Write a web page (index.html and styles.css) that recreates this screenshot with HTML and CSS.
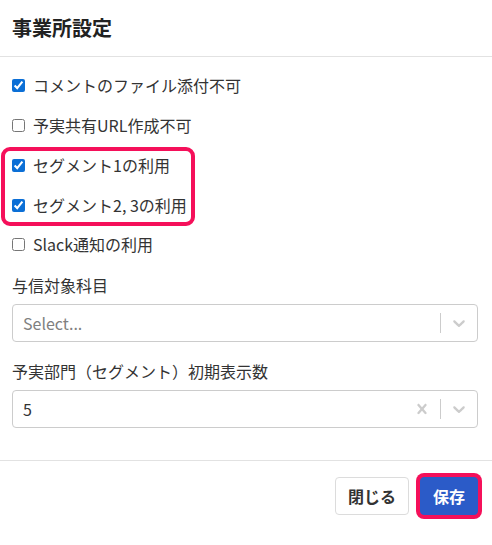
FILE: index.html
```html
<!DOCTYPE html>
<html lang="ja">
<head>
<meta charset="utf-8">
<title>事業所設定</title>
<link rel="stylesheet" href="styles.css">
</head>
<body>
<div class="modal">
  <header class="modal-header">
    <h1 class="modal-title">事業所設定</h1>
  </header>

  <main class="modal-body">
    <div class="check-list">
      <label class="check"><input type="checkbox" checked><span>コメントのファイル添付不可</span></label>
      <label class="check"><input type="checkbox"><span>予実共有URL作成不可</span></label>
      <div class="check-group marked">
        <label class="check"><input type="checkbox" checked><span>セグメント1の利用</span></label>
        <label class="check"><input type="checkbox" checked><span>セグメント2, 3の利用</span></label>
      </div>
      <label class="check"><input type="checkbox"><span>Slack通知の利用</span></label>
    </div>

    <div class="field">
      <div class="field-label">与信対象科目</div>
      <div class="select">
        <div class="select-value placeholder">Select...</div>
        <div class="select-indicators">
          <span class="separator"></span>
          <span class="indicator">
            <svg viewBox="0 0 20 20" width="20" height="20"><path d="M4.516 7.548c0.436-0.446 1.043-0.481 1.576 0l3.908 3.747 3.908-3.747c0.533-0.481 1.141-0.446 1.574 0 0.436 0.445 0.408 1.197 0 1.615-0.406 0.418-4.695 4.502-4.695 4.502-0.217 0.223-0.502 0.335-0.787 0.335s-0.57-0.112-0.789-0.335c0 0-4.287-4.084-4.695-4.502s-0.436-1.170 0-1.615z"/></svg>
          </span>
        </div>
      </div>
    </div>

    <div class="field">
      <div class="field-label">予実部門（セグメント）初期表示数</div>
      <div class="select">
        <div class="select-value">5</div>
        <div class="select-indicators">
          <span class="indicator">
            <svg viewBox="0 0 20 20" width="20" height="20"><path d="M14.348 14.849c-0.469 0.469-1.229 0.469-1.697 0l-2.651-3.030-2.651 3.029c-0.469 0.469-1.229 0.469-1.697 0-0.469-0.469-0.469-1.229 0-1.697l2.758-3.150-2.759-3.152c-0.469-0.469-0.469-1.228 0-1.697s1.228-0.469 1.697 0l2.652 3.031 2.651-3.031c0.469-0.469 1.228-0.469 1.697 0s0.469 1.229 0 1.697l-2.758 3.152 2.758 3.150c0.469 0.469 0.469 1.229 0 1.698z"/></svg>
          </span>
          <span class="separator"></span>
          <span class="indicator">
            <svg viewBox="0 0 20 20" width="20" height="20"><path d="M4.516 7.548c0.436-0.446 1.043-0.481 1.576 0l3.908 3.747 3.908-3.747c0.533-0.481 1.141-0.446 1.574 0 0.436 0.445 0.408 1.197 0 1.615-0.406 0.418-4.695 4.502-4.695 4.502-0.217 0.223-0.502 0.335-0.787 0.335s-0.57-0.112-0.789-0.335c0 0-4.287-4.084-4.695-4.502s-0.436-1.170 0-1.615z"/></svg>
          </span>
        </div>
      </div>
    </div>
  </main>

  <footer class="modal-footer">
    <button class="btn btn-light" type="button">閉じる</button>
    <button class="btn btn-primary marked-btn" type="button">保存</button>
  </footer>
</div>
</body>
</html>
```

FILE: styles.css
```css
* {
  box-sizing: border-box;
}

html, body {
  margin: 0;
  padding: 0;
  background: #fff;
}

body {
  font-family: "Noto Sans CJK JP", "Noto Sans", sans-serif;
  font-size: 16px;
  line-height: 24px;
  color: #333;
}

.modal {
  width: 492px;
  display: flex;
  flex-direction: column;
}

/* header */
.modal-header {
  padding: 13px 14px 13px 12px;
  border-bottom: 1px solid #e2e2e2;
}

.modal-title {
  margin: 0;
  font-size: 20px;
  line-height: 30px;
  font-weight: 700;
  color: #222;
}

/* body */
.modal-body {
  padding: 16px 14px 32px 12px;
  display: flex;
  flex-direction: column;
  gap: 17px;
}

.check-list {
  display: flex;
  flex-direction: column;
  gap: 16px;
}

.check-group {
  display: flex;
  flex-direction: column;
  gap: 16px;
}

.check {
  display: flex;
  align-items: center;
  gap: 8px;
  height: 24px;
  cursor: pointer;
}

.check input {
  margin: 0;
  width: 13px;
  height: 13px;
  accent-color: #0b6fd6;
}

/* pink marker drawn around highlighted options */
.marked {
  align-self: flex-start;
  border: 4px solid #f5105a;
  border-radius: 9px;
  margin: -6px 0 -10px -11px;
  padding: 2px 4px 5px 7px;
}

/* form fields */
.field {
  display: flex;
  flex-direction: column;
  gap: 7px;
}

.field-label {
  color: #333;
}

.select {
  height: 38px;
  border: 1px solid #ccc;
  border-radius: 4px;
  display: flex;
  align-items: center;
  background: #fff;
}

.select-value {
  flex: 1;
  padding: 0 10px;
  color: #333;
}

.select-value.placeholder {
  color: #808080;
}

.select-indicators {
  display: flex;
  align-items: stretch;
  align-self: stretch;
}

.separator {
  width: 1px;
  margin: 8px 0;
  background: #ccc;
}

.indicator {
  display: flex;
  align-items: center;
  padding: 8px;
}

.indicator svg {
  fill: #ccc;
  display: block;
}

/* footer */
.modal-footer {
  border-top: 1px solid #e2e2e2;
  padding: 16px 14px 20px 12px;
  display: flex;
  justify-content: flex-end;
  gap: 11px;
}

.btn {
  font-family: inherit;
  font-size: 16px;
  line-height: 24px;
  font-weight: 700;
  height: 38px;
  padding: 6px 12px;
  border-radius: 4px;
  cursor: pointer;
}

.btn-light {
  background: #fff;
  border: 1px solid #dcdcdc;
  color: #333;
}

.btn-primary {
  background: #2b5bc8;
  border: 1px solid #2b5bc8;
  color: #fff;
}

.marked-btn {
  box-shadow: 0 0 0 4px #f5105a;
}
```
